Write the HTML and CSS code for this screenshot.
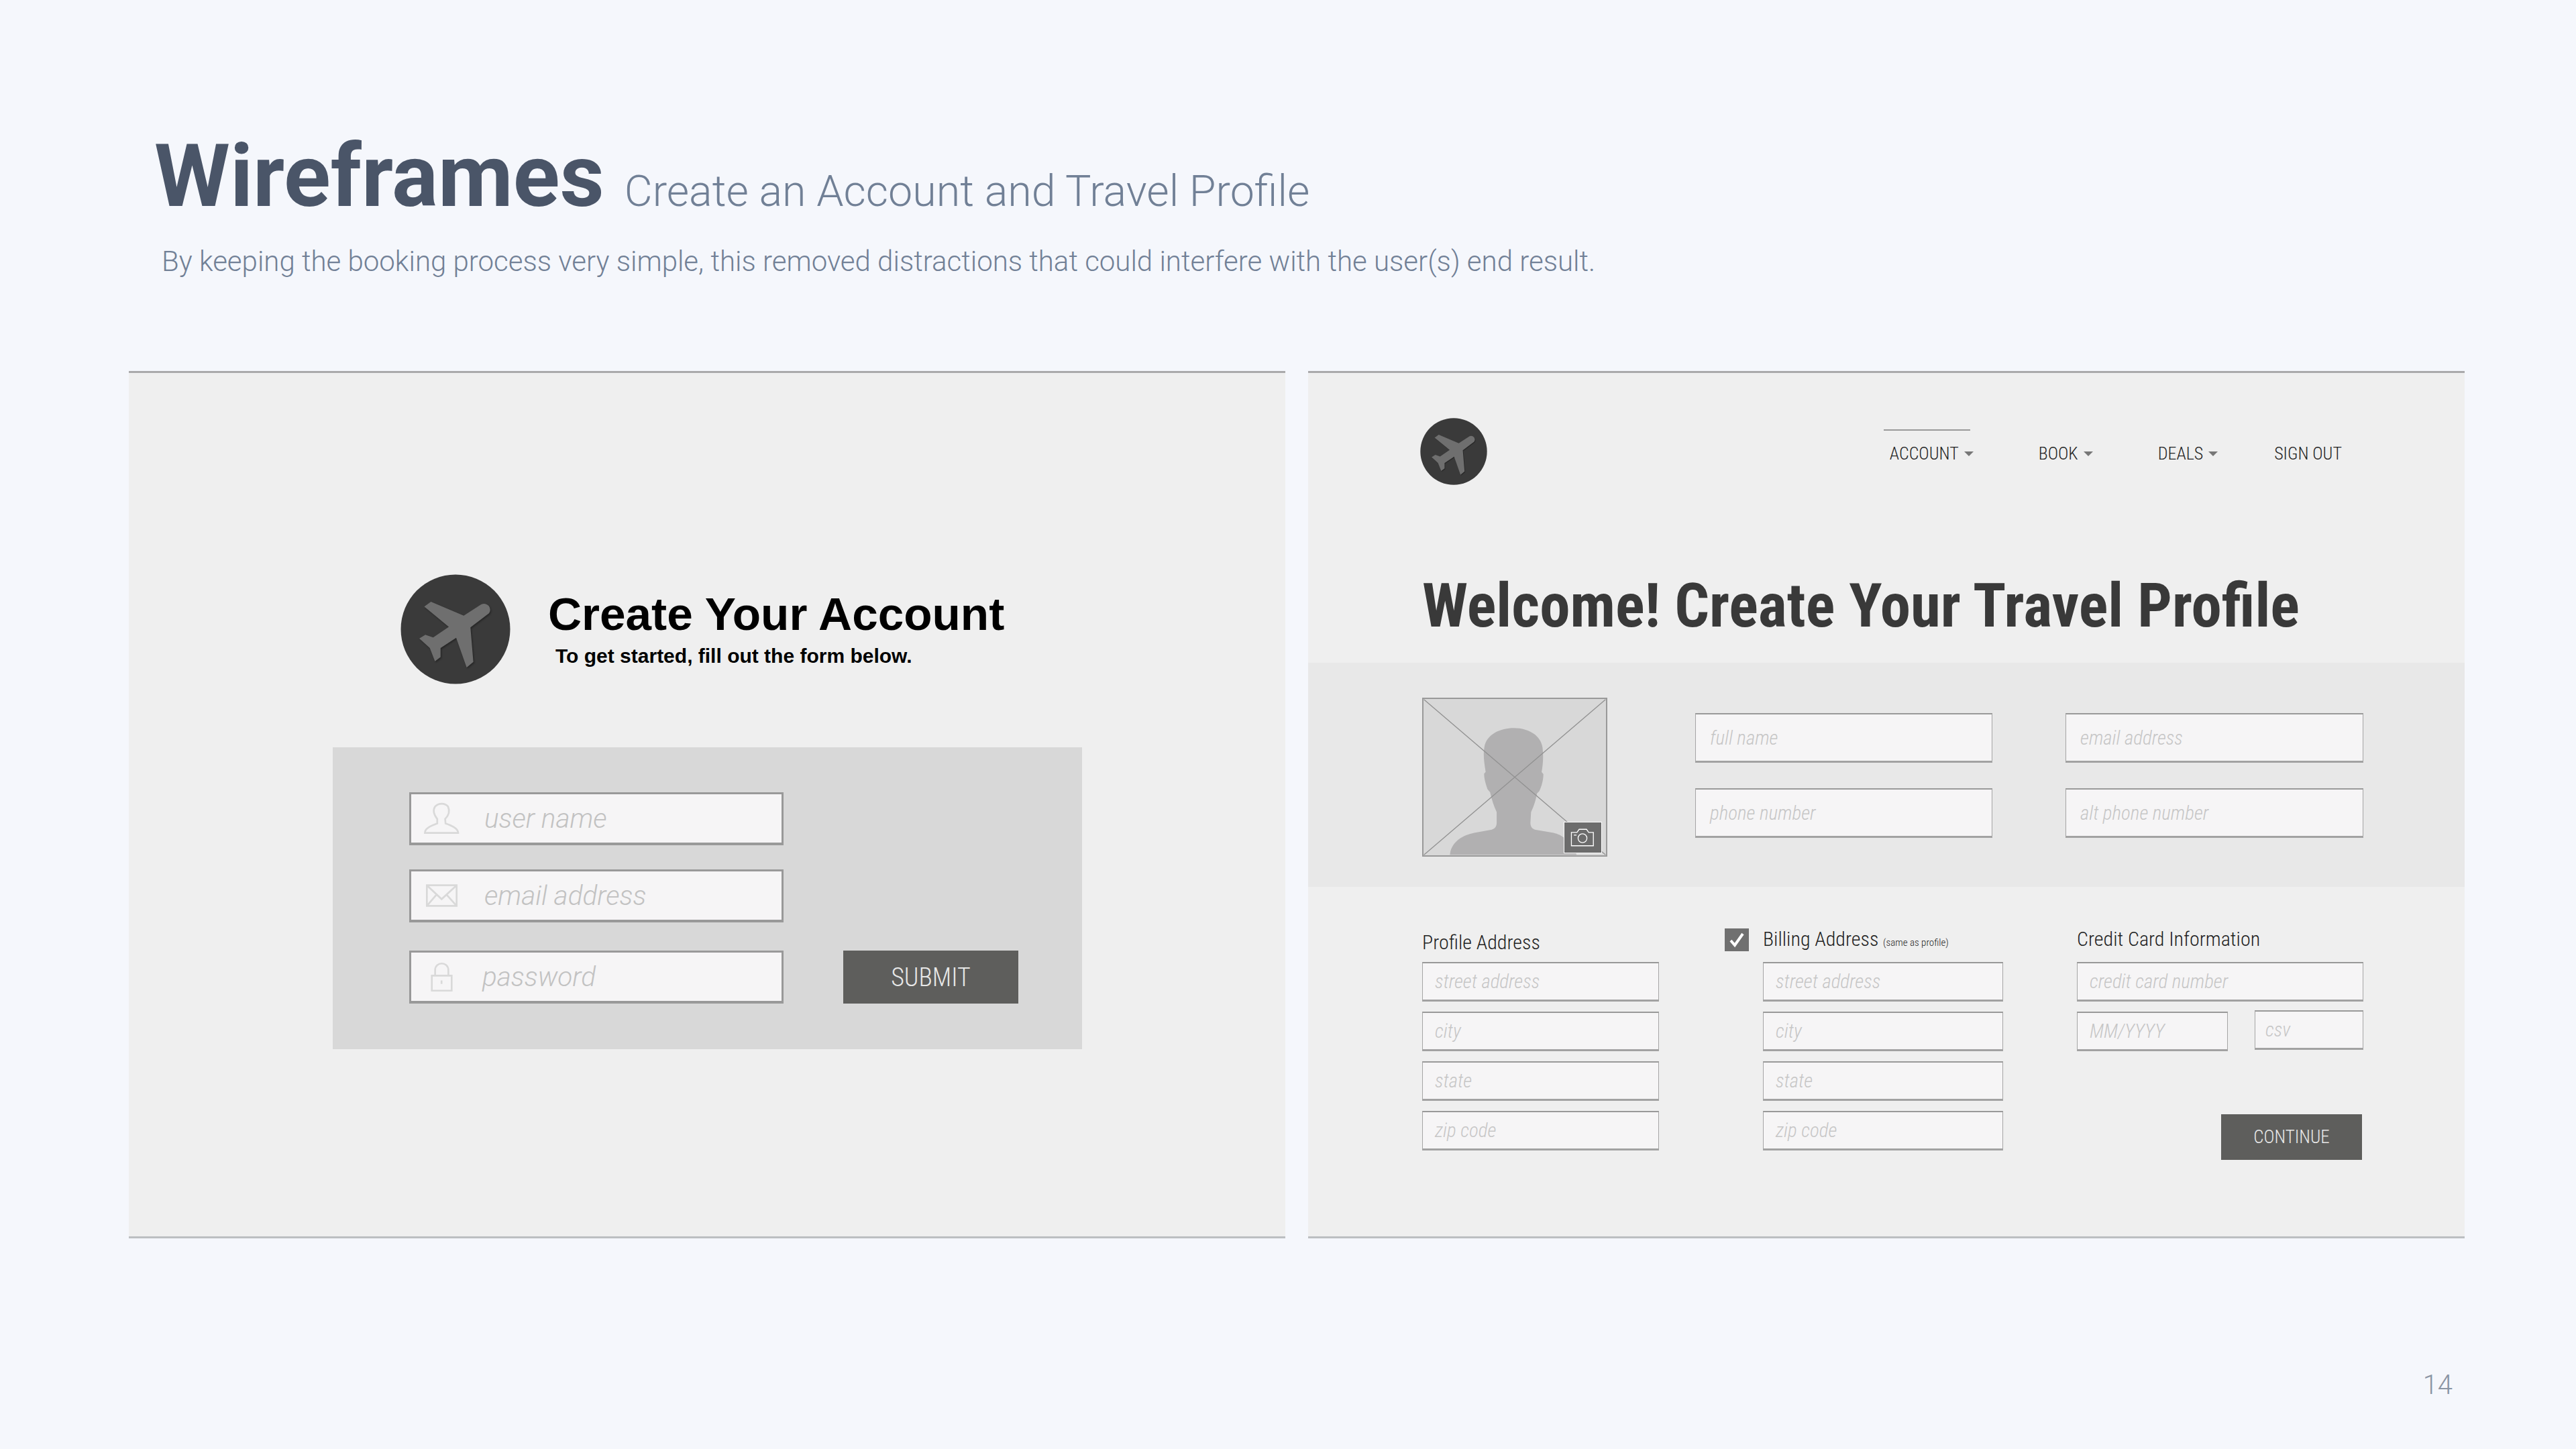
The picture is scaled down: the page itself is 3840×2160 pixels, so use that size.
FILE: index.html
```html
<!DOCTYPE html>
<html lang="en">
<head>
    <meta charset="UTF-8">
    <title>Wireframes</title>
    <link rel="stylesheet" href="styles.css">
</head>
<body>
    <svg class="defs" width="0" height="0">
        <symbol id="logo" viewBox="50 47 490 493">
            <circle cx="295" cy="293.5" r="245" fill="#3a3a3a"/>
            <path class="plane" d="M155 192 L185 170 L332 233 L410 182 Q430 174 445 190 Q456 207 445 222 L362 285 L375 440 L345 465 L298 332 L228 378 L228 418 L203 437 L180 378 L133 335 L160 318 L195 330 L265 283 Z"/>
        </symbol>
    </svg>

    <div class="slide">
        <header class="head">
            <div class="head-row">
                <h1>Wireframes</h1>
                <span class="head-sub">Create an Account and Travel Profile</span>
            </div>
            <p class="head-text">By keeping the booking process very simple, this removed distractions that could interfere with the user(s) end result.</p>
        </header>

        <div class="panels">
            <!-- create account -->
            <section class="panel panel-account">
                <div class="account-top">
                    <svg class="logo-big"><use href="#logo"/></svg>
                    <div class="account-titles">
                        <h2>Create Your Account</h2>
                        <p>To get started, fill out the form below.</p>
                    </div>
                </div>
                <div class="account-form">
                    <div class="big-field">
                        <span class="icon-slot">
                            <svg class="ico-user" viewBox="90 70 170 155"><path d="M100 212 C100 190 130 180 155 170 L155 150 C140 130 135 110 145 95 C160 78 190 78 203 95 C212 115 205 135 190 150 L192 170 C215 178 248 190 248 212 Z"/></svg>
                        </span>
                        <span>user name</span>
                    </div>
                    <div class="big-field">
                        <span class="icon-slot">
                            <svg class="ico-mail" viewBox="105 440 147 108"><path d="M112 448 H245 V540 H112 Z M112 448 L178 510 L245 448 M112 540 L155 490 M245 540 L200 490"/></svg>
                        </span>
                        <span>email address</span>
                    </div>
                    <div class="form-last">
                        <div class="big-field">
                            <span class="icon-slot">
                                <svg class="ico-lock" viewBox="122 785 106 140"><path d="M130 850 H220 V918 H130 Z M145 850 V825 C145 785 205 785 205 825 V850 M174 872 V888"/></svg>
                            </span>
                            <span class="pass-text">password</span>
                        </div>
                        <div class="btn btn-submit">SUBMIT</div>
                    </div>
                </div>
            </section>

            <!-- travel profile -->
            <section class="panel panel-profile">
                <div class="topbar">
                    <svg class="logo-small"><use href="#logo"/></svg>
                    <nav class="nav">
                        <span class="nav-item active">ACCOUNT<i class="caret"></i></span>
                        <span class="nav-item">BOOK<i class="caret"></i></span>
                        <span class="nav-item">DEALS<i class="caret"></i></span>
                        <span class="nav-item nav-last">SIGN OUT</span>
                    </nav>
                </div>
                <h2 class="welcome">Welcome! Create Your Travel Profile</h2>

                <div class="band">
                    <div class="photo">
                        <svg class="photo-img" viewBox="60 30 828 712" preserveAspectRatio="none">
                            <path class="person" d="M180 740 C185 680 240 650 290 640 L370 625 Q392 618 392 595 L392 545 C380 520 370 490 362 455 L350 440 C340 410 335 390 335 370 L342 362 C335 320 330 280 336 250 C345 190 410 162 470 162 C530 162 590 190 600 250 C605 290 602 330 596 362 L604 372 C604 400 595 430 585 450 L575 460 C570 490 560 520 548 545 L545 595 Q545 618 565 625 L650 640 C690 650 720 670 755 740 Z"/>
                            <path class="cross" d="M62 32 L886 740 M886 32 L62 740"/>
                        </svg>
                        <div class="camera">
                            <svg viewBox="697 587 163 136"><path d="M727 632 H752 L762 618 H795 L805 632 H826 V692 H727 Z"/><circle cx="777" cy="658" r="20"/><path d="M738 644 H750"/></svg>
                        </div>
                    </div>
                    <div class="band-fields">
                        <div class="field band-field"><span>full name</span></div>
                        <div class="field band-field"><span>email address</span></div>
                        <div class="field band-field"><span>phone number</span></div>
                        <div class="field band-field"><span>alt phone number</span></div>
                    </div>
                </div>

                <div class="lower">
                    <div class="col col-profile">
                        <div class="col-title">Profile Address</div>
                        <div class="field"><span>street address</span></div>
                        <div class="field"><span>city</span></div>
                        <div class="field"><span>state</span></div>
                        <div class="field"><span>zip code</span></div>
                    </div>
                    <div class="col col-billing">
                        <div class="col-title">
                            <span class="check">
                                <svg viewBox="0 0 36 34"><path d="M9 18 L15 25 L27 8"/></svg>
                            </span>
                            Billing Address <small>(same as profile)</small>
                        </div>
                        <div class="field"><span>street address</span></div>
                        <div class="field"><span>city</span></div>
                        <div class="field"><span>state</span></div>
                        <div class="field"><span>zip code</span></div>
                    </div>
                    <div class="col col-card">
                        <div class="col-title">Credit Card Information</div>
                        <div class="field"><span>credit card number</span></div>
                        <div class="card-row">
                            <div class="field field-date"><span>MM/YYYY</span></div>
                            <div class="field field-csv"><span>csv</span></div>
                        </div>
                        <div class="btn btn-continue">CONTINUE</div>
                    </div>
                </div>
            </section>
        </div>

        <div class="page-no">14</div>
    </div>
</body>
</html>
```

FILE: styles.css
```css
* {
    box-sizing: border-box;
}
body {
    margin: 0;
    background: #f5f7fc;
    font-family: Roboto, sans-serif;
}
.defs {
    position: absolute;
}
.slide {
    position: relative;
    width: 3840px;
    height: 2160px;
    overflow: hidden;
}

/* header */
.head {
    height: 553px;
    padding: 189px 0 0 230px;
}
.head-row {
    display: flex;
    align-items: baseline;
    gap: 30px;
}
h1 {
    margin: 0;
    font-size: 129px;
    line-height: 148px;
    font-weight: 700;
    color: #4a5568;
}
.head-sub {
    font-size: 64.5px;
    font-weight: 300;
    color: #718096;
}
.head-text {
    margin: 28px 0 0 11px;
    font-size: 42px;
    line-height: 50px;
    font-weight: 300;
    color: #718096;
}

/* panels */
.panels {
    display: flex;
    gap: 34px;
    padding-left: 192px;
}
.panel {
    width: 1724px;
    height: 1293px;
    background: #efefef;
    border-top: 3px solid #a9a9ab;
    border-bottom: 3px solid #bcbfc2;
}

/* left panel */
.account-top {
    display: flex;
    padding: 300px 0 0 405px;
}
.logo-big {
    width: 164px;
    height: 164px;
}
.plane {
    fill: #6f6f6f;
    filter: drop-shadow(4px 5px 3px rgba(0,0,0,0.35));
}
.account-titles {
    margin-left: 56px;
    padding-top: 17px;
    font-family: "Liberation Sans", Arial, sans-serif;
    color: #000;
}
.account-titles h2 {
    margin: 0;
    font-size: 69.3px;
    line-height: 84px;
    font-weight: 700;
}
.account-titles p {
    margin: 3px 0 0 11px;
    font-size: 30px;
    line-height: 36px;
    font-weight: 700;
}
.account-form {
    width: 1117px;
    height: 450px;
    margin: 94px 0 0 304px;
    padding: 67px 0 0 114px;
    background: #d8d8d8;
}
.big-field {
    display: flex;
    align-items: center;
    width: 558px;
    height: 79px;
    margin-bottom: 36px;
    background: #f6f5f6;
    border: 3px solid #999;
    border-bottom-width: 4px;
    font-size: 40.5px;
    font-weight: 300;
    font-style: italic;
    color: #c2c2c2;
}
.form-last {
    display: flex;
    gap: 89px;
    margin-top: 42px;
}
.form-last .big-field {
    margin-bottom: 0;
}
.pass-text {
    margin-left: -3px;
}
.icon-slot {
    display: flex;
    justify-content: center;
    flex: none;
    width: 109px;
    padding-right: 18px;
}
.icon-slot svg {
    fill: none;
    stroke: #d9d9d9;
    stroke-width: 8;
}
.ico-user {
    width: 57px;
    height: 52px;
}
.ico-mail {
    width: 49px;
    height: 36px;
}
.ico-lock {
    width: 35px;
    height: 46px;
}
.btn {
    display: flex;
    align-items: center;
    justify-content: center;
    background: #5e5e5c;
    color: #e8e8e8;
    font-stretch: 75%;
    font-weight: 300;
}
.btn-submit {
    width: 261px;
    height: 79px;
    font-size: 38px;
}

/* right panel */
.topbar {
    display: flex;
    align-items: flex-start;
    justify-content: space-between;
    height: 297px;
    padding: 67px 0 0 167px;
}
.logo-small {
    width: 100px;
    height: 100px;
}
.nav {
    display: flex;
    margin-top: 36px;
    margin-right: 183px;
    font-size: 26px;
    font-weight: 300;
    font-stretch: 75%;
    color: #222;
}
.nav-item {
    position: relative;
    display: flex;
    align-items: center;
    margin-left: 97px;
    line-height: 34px;
}
.nav-last {
    margin-left: 84px;
}
.nav-item.active::before {
    content: "";
    position: absolute;
    left: -9px;
    top: -19px;
    width: 129px;
    height: 2px;
    background: #999;
}
.caret {
    width: 0;
    height: 0;
    margin-left: 8px;
    border-left: 7px solid transparent;
    border-right: 7px solid transparent;
    border-top: 7px solid #777;
}
.welcome {
    height: 135px;
    margin: 0;
    padding: 0 0 0 170px;
    font-size: 91px;
    line-height: 100px;
    font-weight: 700;
    font-stretch: 75%;
    color: #393939;
}
.band {
    display: flex;
    height: 334px;
    padding: 52px 0 0 170px;
    background: #e8e8e8;
}
.photo {
    position: relative;
    flex: none;
    width: 276px;
    height: 237px;
    background: #d8d8d8;
    border: 2px solid #999;
}
.photo-img {
    display: block;
    width: 100%;
    height: 100%;
}
.person {
    fill: #b1b0b1;
}
.cross {
    fill: none;
    stroke: #919191;
    stroke-width: 4;
}
.camera {
    position: absolute;
    right: 7px;
    bottom: 4px;
    width: 55px;
    height: 45px;
}
.camera svg {
    display: block;
    width: 100%;
    height: 100%;
    background: #6c6c6c;
    outline: 1px solid #fff;
    fill: none;
    stroke: #fff;
    stroke-width: 4;
}
.band-fields {
    display: grid;
    grid-template-columns: 443px 444px;
    grid-auto-rows: 74px;
    gap: 38px 109px;
    margin: 23px 0 0 131px;
}
.field {
    display: flex;
    align-items: center;
    height: 59px;
    padding-left: 18px;
    background: #f6f5f6;
    border: 1px solid #a5a5a5;
    border-top: 2px solid #999;
    border-bottom: 3px solid #a2a2a2;
    font-size: 29px;
    font-weight: 300;
    font-style: italic;
    font-stretch: 75%;
    color: #c6c6c6;
}
.band-field {
    height: 74px;
    padding-left: 21px;
}
.lower {
    display: flex;
    padding-left: 170px;
}
.col {
    display: flex;
    flex-direction: column;
    gap: 15px;
}
.col-title {
    height: 97px;
    padding-top: 60px;
    font-size: 30px;
    line-height: 36px;
    font-weight: 300;
    font-stretch: 75%;
    color: #222;
}
.col-profile .col-title {
    padding-top: 65px;
}
.col-title small {
    font-size: 15px;
}
.col-profile {
    width: 353px;
}
.col-billing {
    position: relative;
    width: 358px;
    margin-left: 155px;
}
.check {
    position: absolute;
    left: -57px;
    top: 62px;
    width: 36px;
    height: 34px;
    background: #707070;
}
.check svg {
    display: block;
    width: 100%;
    height: 100%;
    fill: none;
    stroke: #fff;
    stroke-width: 4;
}
.col-card {
    width: 427px;
    margin-left: 110px;
}
.card-row {
    display: flex;
    align-items: flex-start;
    justify-content: space-between;
}
.field-date {
    width: 225px;
}
.field-csv {
    width: 162px;
    margin-top: -2px;
    padding-left: 15px;
}
.btn-continue {
    align-self: flex-end;
    width: 210px;
    height: 68px;
    margin: 79px 2px 0 0;
    font-size: 27px;
}

.page-no {
    position: absolute;
    right: 184px;
    bottom: 72px;
    font-size: 40px;
    font-weight: 300;
    color: #8a94a3;
}
```
